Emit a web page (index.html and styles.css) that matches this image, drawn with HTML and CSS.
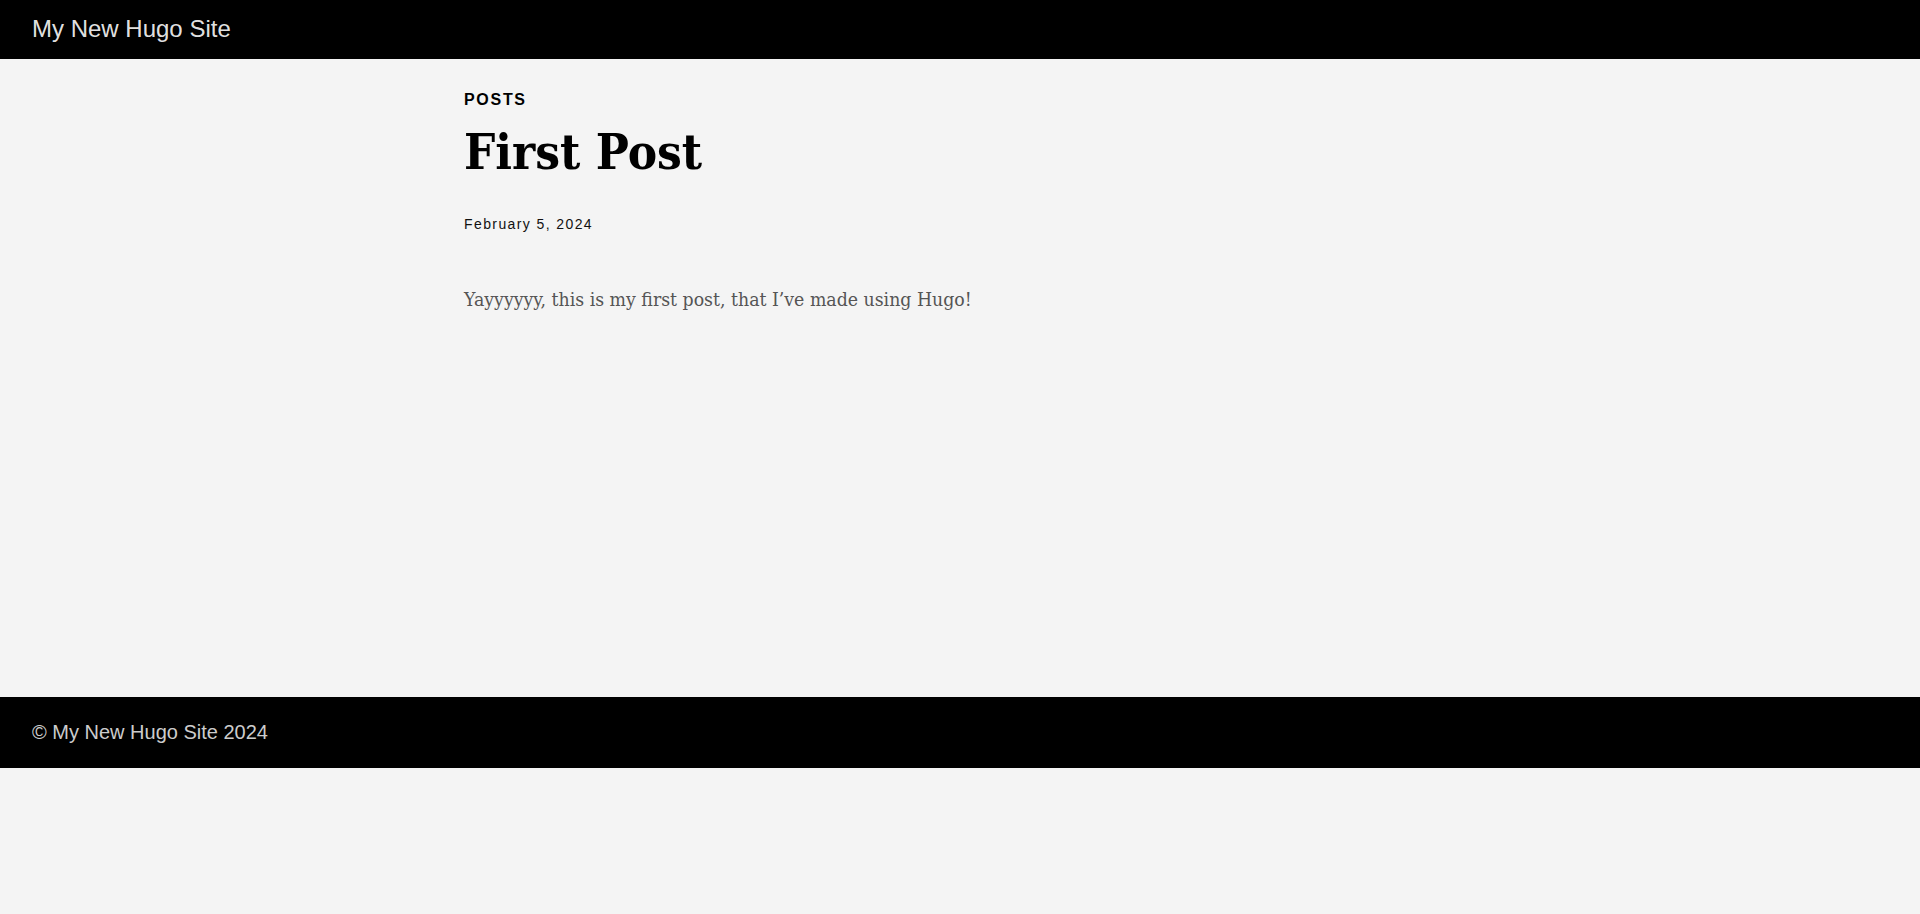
FILE: index.html
```html
<!DOCTYPE html>
<html lang="en">
<head>
<meta charset="utf-8">
<title>First Post | My New Hugo Site</title>
<link rel="stylesheet" href="styles.css">
</head>
<body>
<header class="site-header">
  <a class="site-title" href="#">My New Hugo Site</a>
</header>
<main class="site-main">
  <article class="post">
    <div class="post-header">
      <div class="section-label">Posts</div>
      <h1 class="post-title">First Post</h1>
      <time class="post-date">February 5, 2024</time>
    </div>
    <div class="post-body">
      <p>Yayyyyyy, this is my first post, that I’ve made using Hugo!</p>
    </div>
  </article>
</main>
<footer class="site-footer">
  <span class="copyright">© My New Hugo Site 2024</span>
</footer>
</body>
</html>
```
FILE: styles.css
```css
* {
  box-sizing: border-box;
}
body {
  margin: 0;
  background: #f4f4f4;
  font-family: "Liberation Sans", Arial, sans-serif;
}
.site-header {
  background: #000;
  height: 59px;
  padding: 0 32px;
  display: flex;
  align-items: center;
}
.site-title {
  color: rgba(255, 255, 255, 0.9);
  font-size: 24px;
  text-decoration: none;
  margin-top: -2px;
}
.site-main {
  padding-bottom: 382px;
}
.post {
  max-width: 1024px;
  margin: 0 auto;
  padding: 0 16px;
}
.post-header {
  padding-top: 31px;
}
.section-label {
  font-size: 16px;
  line-height: 20px;
  font-weight: 700;
  text-transform: uppercase;
  letter-spacing: 1.7px;
  color: #000;
}
.post-title {
  font-family: "DejaVu Serif Condensed", "DejaVu Serif", Georgia, serif;
  font-size: 49px;
  font-weight: 700;
  line-height: 60px;
  margin: 12px 0 33px;
  color: #000;
}
.post-date {
  display: block;
  font-size: 14px;
  line-height: 18px;
  letter-spacing: 1.4px;
  color: #111;
}
.post-body {
  font-family: "DejaVu Serif Condensed", "DejaVu Serif", Georgia, serif;
  font-size: 19.3px;
  line-height: 30px;
  color: #555;
  padding-top: 52px;
}
.post-body p {
  margin: 0;
}
.site-footer {
  background: #000;
  height: 71px;
  padding: 0 32px;
  display: flex;
  align-items: center;
}
.copyright {
  color: #ccc;
  font-size: 20px;
}
```
